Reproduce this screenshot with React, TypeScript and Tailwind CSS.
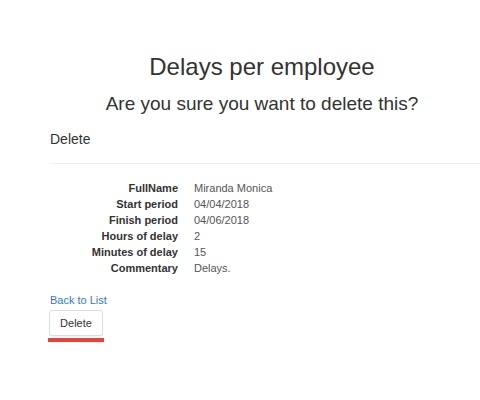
const rows: [string, string][] = [
  ['FullName', 'Miranda Monica'],
  ['Start period', '04/04/2018'],
  ['Finish period', '04/06/2018'],
  ['Hours of delay', '2'],
  ['Minutes of delay', '15'],
  ['Commentary', 'Delays.'],
];

export default function App() {
  return (
    <div className="min-h-[400px] w-[480px] bg-white pl-[50px] text-[#333] font-['Liberation_Sans',Arial,sans-serif] overflow-hidden">
      {/* Headings */}
      <div className="w-[424px] pt-[54px] text-center">
        <h2 className="text-[24px] leading-[26px]">Delays per employee</h2>
        <h3 className="mt-[13px] text-[19px] leading-[22px]">Are you sure you want to delete this?</h3>
      </div>

      <div className="mt-[14px] text-[14px] leading-[20px]">Delete</div>
      <hr className="mt-[14px] w-[500px] border-t border-[#eee]" />

      {/* Details */}
      <dl className="mt-[16px] text-[11px] leading-[16px]">
        {rows.map(([label, value]) => (
          <div key={label} className="flex">
            <dt className="w-[128px] text-right font-bold">{label}</dt>
            <dd className="ml-[16px] text-[#555]">{value}</dd>
          </div>
        ))}
      </dl>

      <div className="mt-[16px] text-[11px] leading-[16px]">
        <a href="#" className="text-[#337ab7]">Back to List</a>
      </div>
      <div className="mt-[2px] flex flex-col items-start">
        <button className="ml-[-1px] h-[26px] w-[54px] rounded-[3px] border border-[#ddd] bg-white text-[11px] text-[#333] shadow-[0_1px_1px_rgba(0,0,0,0.05)]">
          Delete
        </button>
        <div className="ml-[-2px] mt-[2px] h-[4px] w-[56px] bg-[#e8403b]" />
      </div>
    </div>
  );
}
